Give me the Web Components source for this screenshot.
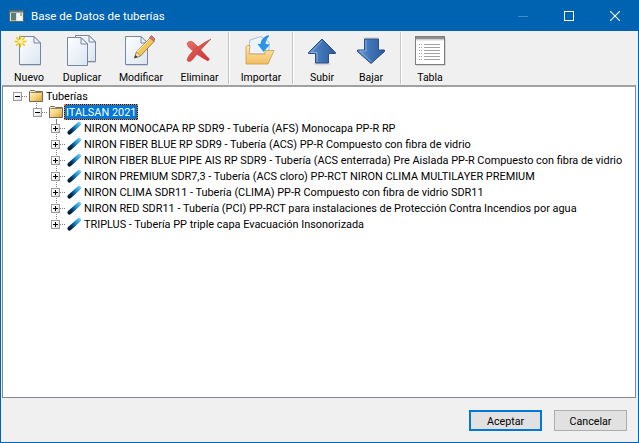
<!DOCTYPE html>
<html lang="es"><head><meta charset="utf-8"><title>Base de Datos de tuberías</title>
<style>
html,body{margin:0;height:100%;overflow:hidden}
body{font:10.9px Roboto,"Liberation Sans",sans-serif;color:#000}
</style></head><body>
<app-window>
  <title-bar slot="title">Base de Datos de tuberías</title-bar>
  <tool-bar slot="tools">
    <tool-button w="48" icon="new">Nuevo</tool-button>
    <tool-button w="58" icon="dup">Duplicar</tool-button>
    <tool-button w="60" icon="edit">Modificar</tool-button>
    <tool-button w="57" icon="del">Eliminar</tool-button>
    <tool-sep></tool-sep>
    <tool-button w="62" icon="imp">Importar</tool-button>
    <tool-sep after="4"></tool-sep>
    <tool-button w="48" icon="up">Subir</tool-button>
    <tool-button w="50" icon="down">Bajar</tool-button>
    <tool-sep before="4"></tool-sep>
    <tool-button w="56" icon="table">Tabla</tool-button>
  </tool-bar>
  <tree-view slot="tree">
    <tree-row level="0" kind="folder" state="open">Tuberías</tree-row>
    <tree-row level="1" kind="folder" state="open" selected>ITALSAN 2021</tree-row>
    <tree-row level="2" kind="pipe" state="closed">NIRON MONOCAPA RP SDR9 - Tubería (AFS) Monocapa PP-R RP</tree-row>
    <tree-row level="2" kind="pipe" state="closed">NIRON FIBER BLUE RP SDR9 - Tubería (ACS) PP-R Compuesto con fibra de vidrio</tree-row>
    <tree-row level="2" kind="pipe" state="closed">NIRON FIBER BLUE PIPE AIS RP SDR9 - Tubería (ACS enterrada) Pre Aislada PP-R Compuesto con fibra de vidrio</tree-row>
    <tree-row level="2" kind="pipe" state="closed">NIRON PREMIUM SDR7,3 - Tubería (ACS cloro) PP-RCT NIRON CLIMA MULTILAYER PREMIUM</tree-row>
    <tree-row level="2" kind="pipe" state="closed">NIRON CLIMA SDR11 - Tubería (CLIMA) PP-R Compuesto con fibra de vidrio SDR11</tree-row>
    <tree-row level="2" kind="pipe" state="closed">NIRON RED SDR11 - Tubería (PCI) PP-RCT para instalaciones de Protección Contra Incendios por agua</tree-row>
    <tree-row level="2" kind="pipe" state="closed" last>TRIPLUS - Tubería PP triple capa Evacuación Insonorizada</tree-row>
  </tree-view>
  <dialog-button slot="actions" primary>Aceptar</dialog-button>
  <dialog-button slot="actions">Cancelar</dialog-button>
</app-window>
<script>
const svgDefs = `
<defs>
<linearGradient id="paper" x1="0" y1="0" x2="1" y2="1"><stop offset="0" stop-color="#ffffff"/><stop offset="1" stop-color="#dbe5f0"/></linearGradient>
<linearGradient id="blueA" x1="0" y1="0" x2="1" y2="0"><stop offset="0" stop-color="#5f93cf"/><stop offset=".5" stop-color="#3f73b5"/><stop offset="1" stop-color="#2d5a9a"/></linearGradient>
<linearGradient id="red" x1="0" y1="0" x2="1" y2="1"><stop offset="0" stop-color="#e8706a"/><stop offset="1" stop-color="#c8302a"/></linearGradient>
<linearGradient id="fold" x1="0" y1="0" x2="0" y2="1"><stop offset="0" stop-color="#fde9b0"/><stop offset="1" stop-color="#f3bd62"/></linearGradient>
<linearGradient id="fade" x1="0" y1="0" x2="0" y2="1"><stop offset="0" stop-color="#bbb" stop-opacity=".55"/><stop offset="1" stop-color="#bbb" stop-opacity="0"/></linearGradient>
</defs>`;
const doc = (x,y,w,h,f=7)=>`<path d="M${x+.5} ${y+.5}H${x+w-f}L${x+w-.5} ${y+f}V${y+h-.5}H${x+.5}Z" fill="url(#paper)" stroke="#7488a6"/><path d="M${x+w-f} ${y+.5}V${y+f}H${x+w-.5}Z" fill="#eef2f7" stroke="#7488a6" stroke-linejoin="round"/><path d="M${x+1} ${y+h+.5}H${x+w}" stroke="#cfd3da"/>`;
const ICONS = {
 new: doc(6,2,22,29)+`<g stroke="#f5c400" stroke-width="1.5"><path d="M7.5 1.5V13.5M1.5 7.5H13.5M3.2 3.2L11.8 11.8M11.8 3.2L3.2 11.8"/></g><circle cx="7.5" cy="7.5" r="2.2" fill="#fff6b0"/>`,
 dup: doc(9,1,21,27)+doc(1,3,21,29),
 edit: doc(0,2,23,29)+`<g transform="translate(-2.5 0)"><path d="M12 24L14 18L28 3.5L32 7L18 22Z" fill="#f3c65a" stroke="#8a6b2c" stroke-width=".8"/><path d="M14 18.5L28 4.5" stroke="#fbe7a6"/><path d="M27 3.5L29 1.5L32.5 5L31 7Z" fill="#d9717a" stroke="#8a4a4a" stroke-width=".6"/><path d="M12 24L14 18L18 22Z" fill="#f4e2c2" stroke="#8a6b2c" stroke-width=".6"/><path d="M12 24L13 21L15 23Z" fill="#333"/></g>`,
 del: `<path d="M3 10C4 7 7 6.5 9.5 8.5C14 12.5 20 19.5 25.5 25L24 27C17 23.5 10 18.5 4.5 13Z" fill="url(#red)" stroke="#b8403a" stroke-width=".5"/><path d="M3 26C3.5 24 5 21 7 19C12 13.5 19 9 27 5C21.5 10.5 15 17.5 9.5 24.5C8 27 4.5 29 3 26Z" fill="url(#red)" stroke="#b8403a" stroke-width=".5"/>`,
 imp: `<path d="M3 20L5 6L16 2.5L24 8L24 20Z" fill="#eef3f9" stroke="#9fb0c6" stroke-width=".8"/><path d="M1 13C1 12 2 11.5 3 11.5L5 11.5L4 20H20V16.5H29L23 30H1Z" fill="url(#fold)" stroke="#c99a4c" stroke-width=".8"/><path d="M23.5 1C18.5 2.5 16 6 15.5 10L12.5 10L18.5 18L25 10.5L20.5 10C21 7 22 4 24 2.5Z" fill="#2a95e8"/>`,
 up: `<ellipse cx="16" cy="30" rx="9" ry="1.5" fill="#d9d9d9"/><path d="M16 5L29.5 18.5V19.5H22.5V29H9.5V19.5H2.5V18.5Z" fill="url(#blueA)" stroke="#2c4f87"/><path d="M16 7L5 18.5H11V28" fill="none" stroke="#8fb6e2" stroke-width=".8"/>`,
 down: `<rect x="8" y="3" width="16" height="2" fill="url(#fade)"/><path d="M9.5 5H23.5V16H29.5V17.5L16 29.5L2.5 17.5V16H9.5Z" fill="url(#blueA)" stroke="#2c4f87"/><path d="M11 6V17H5L16 27.5" fill="none" stroke="#8fb6e2" stroke-width=".8"/>`,
 table: `<rect x="1.5" y="2.5" width="29" height="28" fill="#fff" stroke="#7e7e7e"/><rect x="2" y="3" width="28" height="2.5" fill="#8f8f8f"/><rect x="2" y="5.5" width="28" height="1" fill="#d9d9d9"/><path d="M2 31.5H31.5V4" fill="none" stroke="#d4d4d4"/><path d="M5 10.5H8M5 13.5H8M5 16.5H8M5 19.5H8M5 22.5H8M5 25.5H8" stroke="#a0a0a0" stroke-dasharray="1 1"/><path d="M10 10.5H26M10 13.5H26M10 16.5H26M10 19.5H26M10 22.5H26M10 25.5H26" stroke="#a2a2a2"/>`
};
function def(name, html){
  customElements.define(name, class extends HTMLElement{
    connectedCallback(){
      if(this.shadowRoot) return;
      this.attachShadow({mode:'open'}).innerHTML=typeof html==='function'?html(this):html;
    }
  });
}
def('app-window',`<style>
:host{display:flex;flex-direction:column;box-sizing:border-box;width:639px;height:443px;border:1px solid #0063b1;background:#f0f0f0}
.tree{display:flex;flex:1;min-height:0;padding:0 2px 0 1px}
.actions{display:flex;justify-content:flex-end;gap:12px;padding:12px 11px 11px 0}
</style><slot name="title"></slot><slot name="tools"></slot><div class="tree"><slot name="tree"></slot></div><div class="actions"><slot name="actions"></slot></div>`);
def('title-bar',`<style>
:host{display:flex;align-items:center;height:30px;background:#0063b1;color:#fff;font:11.5px Roboto,sans-serif}
.ic{width:16px;height:16px;margin:0 7px 0 7px;flex:none}
.t{flex:1;white-space:nowrap}
.b{width:46px;height:30px;display:flex;align-items:center;justify-content:center;flex:none}
</style>
<svg class="ic" viewBox="0 0 16 16"><rect x="1.5" y="2.5" width="14" height="11" fill="#dfe6e2" stroke="#59666a"/><rect x="2" y="3" width="13" height="1.5" fill="#6b7b80"/><rect x="3" y="5" width="5" height="7.5" fill="#5f7f70"/><rect x="9" y="5" width="5" height="7.5" fill="#f4f6f4"/><rect x="12" y="5" width="2" height="3" fill="#9fb8ac"/></svg>
<span class="t"><slot></slot></span>
<div class="b"><svg width="10" height="10" viewBox="0 0 10 10"><path d="M0 5.5H10" stroke="#3f8ccb"/></svg></div>
<div class="b"><svg width="10" height="10" viewBox="0 0 10 10"><rect x=".5" y=".5" width="9" height="9" fill="none" stroke="#fff"/></svg></div>
<div class="b"><svg width="10" height="10" viewBox="0 0 10 10"><path d="M0 0L10 10M10 0L0 10" stroke="#fff" stroke-width="1.1"/></svg></div>`);
def('tool-bar',`<style>
:host{display:flex;align-items:stretch;height:54px;padding-left:4px;box-sizing:border-box;background:#f0f0f0}
</style><slot></slot>`);
def('tool-sep',el=>`<style>:host{display:block;width:2px;margin:1px ${el.getAttribute('after')||0}px 1px ${el.getAttribute('before')||0}px;background:linear-gradient(90deg,#c4c4c4 50%,#fff 50%);flex:none}</style>`);
def('tool-button',el=>`<style>
:host{display:flex;flex-direction:column;align-items:center;flex:none;width:${el.getAttribute('w')}px;padding-top:3px;box-sizing:border-box}
svg{width:32px;height:32px;display:block}
span{margin-top:5px;font-size:10.5px;line-height:14px;white-space:nowrap}
</style><svg viewBox="0 0 32 32">${svgDefs}${ICONS[el.getAttribute('icon')]}</svg><span><slot></slot></span>`);
def('tree-view',`<style>
:host{display:block;flex:1;box-sizing:border-box;background:#fff;border:1px solid #828790;border-top:2px solid #a0a0a0;padding-top:1px}
</style><slot></slot>`);
const FOLDER=`<svg width="16" height="16" viewBox="0 0 16 16"><defs><linearGradient id="f" x1="0" y1="0" x2="1" y2="1"><stop offset="0" stop-color="#fff8d6"/><stop offset=".55" stop-color="#f7d27a"/><stop offset="1" stop-color="#d99a34"/></linearGradient></defs><path d="M1.5 13.5V3.5L2.5 2.5H6.5L7.5 3.5H14.5V13.5Z" fill="url(#f)" stroke="#6e6a5c"/><path d="M2.5 4.5H13.5" stroke="#8a8470"/></svg>`;
const PIPE=`<svg width="16" height="16" viewBox="0 0 16 16"><defs><linearGradient id="p" gradientUnits="userSpaceOnUse" x1="2" y1="14" x2="14" y2="3"><stop offset="0" stop-color="#021022"/><stop offset=".35" stop-color="#053a66"/><stop offset=".62" stop-color="#1688c4"/><stop offset="1" stop-color="#6ccaec"/></linearGradient></defs><path d="M3.5 12.5L13 4" stroke="url(#p)" stroke-width="4.2" stroke-linecap="round"/></svg>`;
def('tree-row',el=>{
 const lv=+el.getAttribute('level'), open=el.getAttribute('state')==='open', kind=el.getAttribute('kind'), sel=el.hasAttribute('selected'), last=el.hasAttribute('last');
 const indent=[9,29,47][lv];
 const vx=indent+6;
 const dot='background-image:linear-gradient(#808080 50%,transparent 50%);background-size:1px 2px;width:1px;position:absolute;';
 let line='';
 if(lv<2) line=`<i style="${dot}left:${vx+18}px;top:13px;height:7px"></i>`;
 if(lv===2) line=`<i style="${dot}left:${vx}px;top:0;${last?'height:5px':'height:16px'}"></i>`;
 return `<style>
:host{display:flex;align-items:center;height:16px;position:relative;padding-left:${indent}px;white-space:nowrap}
.x{width:9px;height:9px;margin:1px 0 0 1px;box-sizing:border-box;border:1px solid #9a9a9a;background:linear-gradient(135deg,#fff 30%,#dcdcdc);position:relative;flex:none;z-index:1}
.x::before{content:"";position:absolute;left:1px;top:3px;width:5px;height:1px;background:#000}
.x.c::after{content:"";position:absolute;left:3px;top:1px;width:1px;height:5px;background:#000}
.d{width:6px;height:1px;margin-top:1px;background-image:linear-gradient(90deg,#808080 50%,transparent 50%);background-size:2px 1px;flex:none}
.i{width:16px;height:16px;flex:none;position:relative;z-index:1}
.l{display:block;padding:1px 2px 0;box-sizing:border-box;height:16px;line-height:16px;${sel?'padding:1px 1px 0;line-height:13px;background:#0078d7;color:#fff;border:1px solid #1a1208;outline:1px dotted #ff8728;outline-offset:-1px;':''}}
i{display:block}
</style>${line}<span class="x ${open?'':'c'}"></span><span class="d"></span><span class="i">${kind==='pipe'?PIPE:FOLDER}</span><span class="l"><slot></slot></span>`;
});
def('dialog-button',el=>`<style>
:host{display:flex;align-items:center;justify-content:center;box-sizing:border-box;width:73px;height:21px;padding-top:1px;background:#e1e1e1;font-size:10.7px;border:${el.hasAttribute('primary')?'2px solid #0078d7':'1px solid #adadad'}}
</style><slot></slot>`);
</script>
</body></html>
